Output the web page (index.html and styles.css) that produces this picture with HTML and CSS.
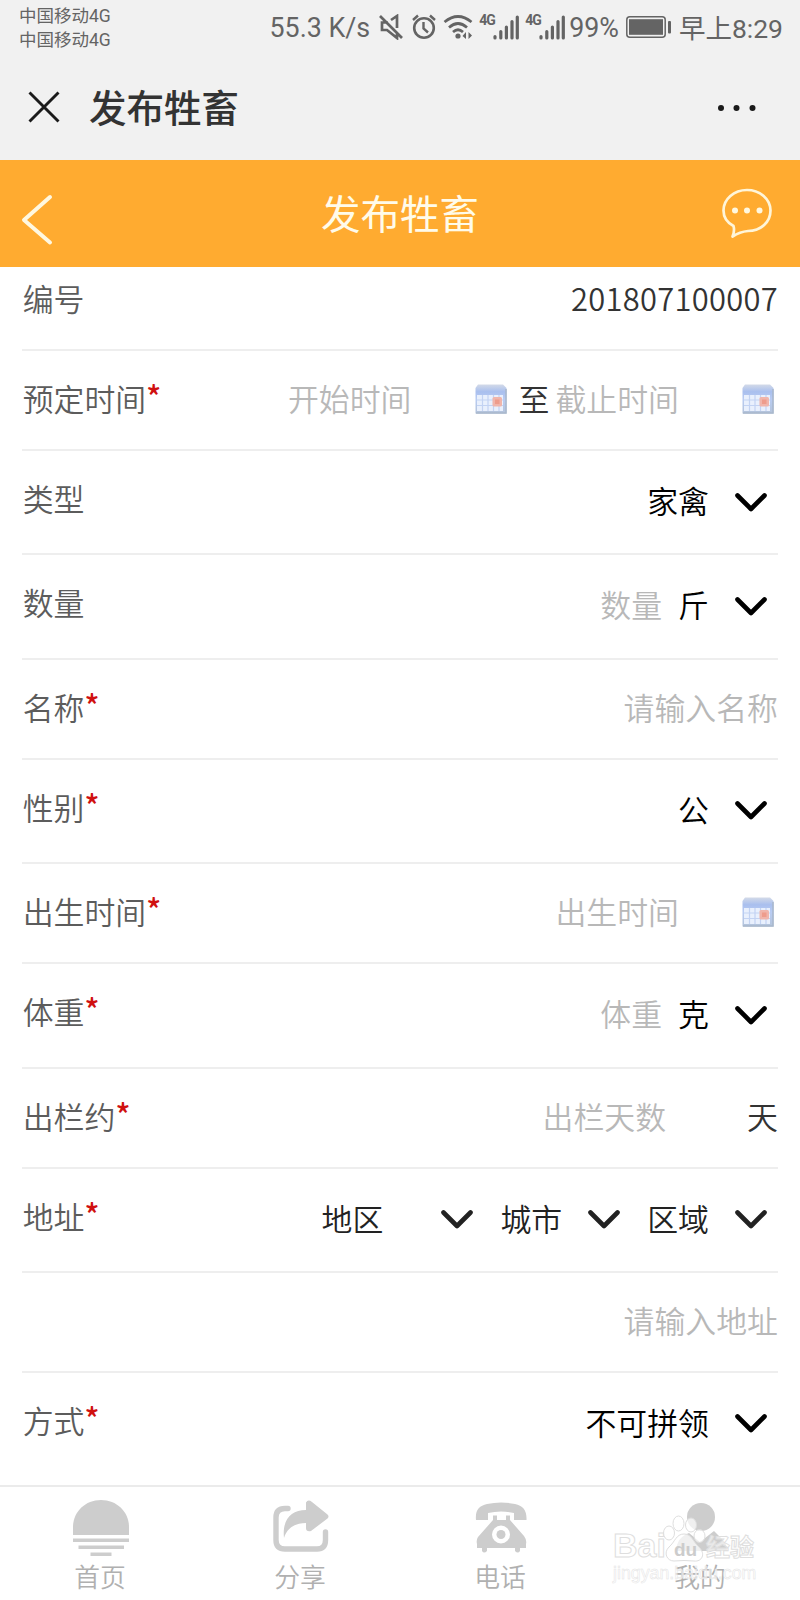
FILE: index.html
```html
<!DOCTYPE html>
<html lang="zh-CN">
<head>
    <meta charset="UTF-8">
    <title>发布牲畜</title>
    <link rel="stylesheet" href="styles.css">
</head>
<body>
<svg class="defs">
    <defs>
        <linearGradient id="calBg" x1="0" y1="0" x2="0" y2="1">
            <stop offset="0" stop-color="#d3dae8"/>
            <stop offset="0.25" stop-color="#a9bfee"/>
            <stop offset="0.5" stop-color="#b9ccf3"/>
            <stop offset="1" stop-color="#b3c3da"/>
        </linearGradient>
    </defs>
    <symbol id="down" viewBox="0 0 32 20">
        <path d="M2.5 2.5L16 16L29.5 2.5" fill="none" stroke="currentColor" stroke-width="4.6" stroke-linecap="round" stroke-linejoin="round"/>
    </symbol>
    <symbol id="cal" viewBox="0 0 32 30">
        <path d="M3 0.5H28L31.5 4V29.5H0.5V4Z" fill="url(#calBg)"/>
        <path d="M2 11H28V27H2Z" fill="#e9f0fd"/>
        <path d="M7.5 11V27M13 11V27M18.5 11V27M24 11V27M2 16H28M2 21.5H28" stroke="#c3d3f3" stroke-width="1.2"/>
        <rect x="17.5" y="13" width="9.5" height="9.5" rx="1.5" fill="#f0b5ab"/>
        <rect x="20" y="15.5" width="4.5" height="4.5" fill="#ee9c8c"/>
        <path d="M31 5V29H1" fill="none" stroke="#a9b8cb" stroke-width="1.5"/>
    </symbol>
    <symbol id="signal" viewBox="0 0 26 25">
        <path d="M2 21.5V23M7.8 16.5V23M13.4 12V23M19 6.5V23M24.3 2V23" fill="none" stroke="currentColor" stroke-width="3.2" stroke-linecap="round"/>
    </symbol>
</svg>

<div id="status">
    <div class="carrier">
        <p>中国移动4G</p>
        <p>中国移动4G</p>
    </div>
    <div class="tray">
        <span class="speed">55.3 K/s</span>
        <svg class="mute" viewBox="0 0 24 26">
            <path d="M1 2L23 24M9 8.5H3V16H8L18 24V19M12 6L18 2V14" fill="none" stroke="currentColor" stroke-width="2.7"/>
        </svg>
        <svg class="alarm" viewBox="0 0 24 26">
            <circle cx="12" cy="14" r="9.8" fill="none" stroke="currentColor" stroke-width="2.6"/>
            <path d="M1 6L6 1.5M23 6L18 1.5M11.5 8V14.5L16 18.5" fill="none" stroke="currentColor" stroke-width="2.4"/>
        </svg>
        <svg class="wifi" viewBox="0 0 30 26">
            <path d="M1.5 8Q15 -3 28.5 8M6 13.5Q15 5.5 24 13.5M10 18Q15 13.5 20 18" fill="none" stroke="currentColor" stroke-width="2.7"/>
            <circle cx="15" cy="22" r="2.6" fill="currentColor"/>
            <path d="M23 18V25L19.5 22ZM25.5 25V18L29 21.5Z" fill="currentColor"/>
        </svg>
        <span class="g4">4G</span>
        <svg class="signal"><use href="#signal"/></svg>
        <span class="g4">4G</span>
        <svg class="signal"><use href="#signal"/></svg>
        <span class="percent">99%</span>
        <svg class="battery" viewBox="0 0 46 22">
            <rect x="0.8" y="0.8" width="38.4" height="20.4" rx="3" fill="none" stroke="currentColor" stroke-width="1.5"/>
            <rect x="3" y="3.2" width="34" height="15.6" fill="currentColor"/>
            <rect x="42" y="5" width="3" height="12.5" rx="1" fill="currentColor"/>
        </svg>
        <span class="time">早上8:29</span>
    </div>
</div>

<div id="wxbar">
    <svg class="close" viewBox="0 0 32 32">
        <path d="M1.5 1.5L30.5 30.5M30.5 1.5L1.5 30.5" stroke="#1a1a1a" stroke-width="2.9"/>
    </svg>
    <h1>发布牲畜</h1>
    <svg class="more" viewBox="0 0 40 8">
        <circle cx="4" cy="4" r="3"/>
        <circle cx="19.5" cy="4" r="3"/>
        <circle cx="35.5" cy="4" r="3"/>
    </svg>
</div>

<div id="header">
    <svg class="back" viewBox="0 0 32 52">
        <path d="M29 3L3 26L29 48.5" fill="none" stroke="#fff8e0" stroke-width="4" stroke-linecap="round" stroke-linejoin="round"/>
    </svg>
    <h2>发布牲畜</h2>
    <svg class="chat" viewBox="0 0 50 50">
        <path d="M11.5 38C5 34.5 1.5 28.5 1.5 22.5C1.5 11 12 2 25 2S48.5 11 48.5 22.5S39 43 26 43C21 43.5 16 45 10.5 48.5C12 45 12.5 41.5 11.5 38Z" fill="none" stroke="#fff5d8" stroke-width="2.7" stroke-linejoin="round"/>
        <g fill="#fff8e0">
            <circle cx="13" cy="22.5" r="3"/>
            <circle cx="25" cy="22.5" r="3"/>
            <circle cx="37.5" cy="22.5" r="3"/>
        </g>
    </svg>
</div>

<ul id="form">
    <li class="first">
        <label>编号</label>
        <div class="value">201807100007</div>
    </li>
    <li>
        <label>预定时间<i>*</i></label>
        <div class="value">
            <span class="date hint">开始时间</span>
            <svg class="cal"><use href="#cal"/></svg>
            <span class="to">至</span>
            <span class="date end hint">截止时间</span>
            <svg class="cal last"><use href="#cal"/></svg>
        </div>
    </li>
    <li class="select">
        <label>类型</label>
        <div class="value">家禽<svg class="down"><use href="#down"/></svg></div>
    </li>
    <li class="select">
        <label>数量</label>
        <div class="value"><span class="num hint">数量</span>斤<svg class="down"><use href="#down"/></svg></div>
    </li>
    <li>
        <label>名称<i>*</i></label>
        <div class="value hint">请输入名称</div>
    </li>
    <li class="select">
        <label>性别<i>*</i></label>
        <div class="value">公<svg class="down"><use href="#down"/></svg></div>
    </li>
    <li>
        <label>出生时间<i>*</i></label>
        <div class="value">
            <span class="date end hint">出生时间</span>
            <svg class="cal last"><use href="#cal"/></svg>
        </div>
    </li>
    <li class="select">
        <label>体重<i>*</i></label>
        <div class="value"><span class="num hint">体重</span>克<svg class="down"><use href="#down"/></svg></div>
    </li>
    <li>
        <label>出栏约<i>*</i></label>
        <div class="value"><span class="days hint">出栏天数</span>天</div>
    </li>
    <li class="select area">
        <label>地址<i>*</i></label>
        <div class="value">
            <span class="province">地区</span><svg class="down"><use href="#down"/></svg>
            <span class="city">城市</span><svg class="down"><use href="#down"/></svg>
            <span class="city">区域</span><svg class="down"><use href="#down"/></svg>
        </div>
    </li>
    <li>
        <label></label>
        <div class="value hint">请输入地址</div>
    </li>
    <li class="select final">
        <label>方式<i>*</i></label>
        <div class="value">不可拼领<svg class="down"><use href="#down"/></svg></div>
    </li>
</ul>

<div id="footer">
    <div class="tab">
        <svg viewBox="0 0 58 58">
            <path d="M2 35V27C2 12 14 0 30 0S58 12 58 27V35Z"/>
            <path d="M2 38.5H58V42H2ZM7.5 45.5H53V49H7.5ZM19.5 52.5H40.5V56H19.5Z"/>
        </svg>
        <span>首页</span>
    </div>
    <div class="tab">
        <svg viewBox="0 0 58 58">
            <path d="M17 8.5H14Q5 8.5 5 17.5V40Q5 49 14 49H46Q54.5 49 54.5 40V32" fill="none" stroke="#cdcdcd" stroke-width="5.4" stroke-linecap="round"/>
            <path d="M13 38C11 20 20 10 35 10V2.5Q37 -1 41 2L56.5 14.5Q58.5 16.5 56.5 18.5L40 31Q35 32 35 28V23C24 23 16 28 13 38Z"/>
        </svg>
        <span>分享</span>
    </div>
    <div class="tab">
        <svg viewBox="0 0 58 58">
            <path d="M5 20C4 10 8 6 16 4Q30 1 44 4C52 6 56 10 55.5 20H43V13Q30 10 17 13V20Z"/>
            <path fill-rule="evenodd" d="M22 15.5H26V20H35V15.5H39V20L53 36Q56 40 55 44V48H49V51Q47 54 44 51V48H16V51Q13 54 11 51V48H6V44Q5 40 7 37L22 20ZM30 25.5A9 9 0 1 0 30 43.5A9 9 0 1 0 30 25.5Z"/>
            <circle cx="30" cy="34.5" r="4.5"/>
        </svg>
        <span>电话</span>
    </div>
    <div class="tab">
        <svg viewBox="0 0 58 58">
            <circle cx="30" cy="17" r="14"/>
            <path d="M5 51Q6 37 18 33L29 42L43 31L51 39Q56 44 56 51Z"/>
        </svg>
        <span>我的</span>
    </div>
    <div class="watermark">
        <div class="brand">
            <b>Bai</b>
            <svg viewBox="0 0 46 48">
                <g fill="#fff" fill-opacity="0.7" stroke="#dedede">
                    <ellipse cx="7" cy="18" rx="5.5" ry="7"/>
                    <ellipse cx="16.5" cy="8.5" rx="5.5" ry="7.5"/>
                    <ellipse cx="29" cy="10" rx="5.5" ry="7"/>
                    <ellipse cx="37.5" cy="21" rx="5.5" ry="6.5"/>
                    <path d="M22 19C14 19 13 27 7 32C1 38 5 46 12 46Q22 45 32 46C40 47 44 39 37 32C31 27 30 19 22 19Z"/>
                </g>
                <text x="12" y="41">du</text>
            </svg>
            <b class="cn">经验</b>
        </div>
        <p>jingyan.baidu.com</p>
    </div>
</div>
</body>
</html>
```
FILE: styles.css
```css
*{
    margin: 0;
    padding: 0;
    box-sizing: border-box;
}
body{
    width: 800px;
    height: 1600px;
    overflow: hidden;
    display: flex;
    flex-direction: column;
    background: #fff;
    font-family: "Noto Sans CJK SC", sans-serif;
    color: #333;
}
ul{
    list-style: none;
}
i{
    font-style: normal;
}
svg{
    display: block;
    flex: none;
}
.defs{
    position: absolute;
    width: 0;
    height: 0;
}

/* 状态栏 */
#status{
    height: 56px;
    padding: 4px 17px 0 19px;
    display: flex;
    justify-content: space-between;
    background: #f1f1f1;
    color: #646464;
    font-family: Roboto, "Noto Sans CJK SC", sans-serif;
}
.carrier{
    font-size: 17.5px;
    line-height: 24px;
}
.tray{
    display: flex;
    height: 46px;
    align-items: center;
    font-size: 26.8px;
    white-space: nowrap;
}
.speed, .percent{
    margin-top: 2px;
}
.time{
    margin-top: -1px;
    font-size: 26.5px;
}
.mute{
    width: 24px;
    height: 26px;
    margin-left: 9px;
}
.alarm{
    width: 24px;
    height: 26px;
    margin-left: 9px;
}
.wifi{
    width: 30px;
    height: 26px;
    margin-left: 7px;
}
.g4{
    font-size: 14px;
    font-weight: bold;
    width: 14px;
    margin: -14px 0 0 6px;
    letter-spacing: -1px;
}
.signal{
    width: 26px;
    height: 25px;
}
.percent{
    margin-left: 4px;
}
.battery{
    width: 46px;
    height: 22px;
    margin: 0 7px 0 7px;
}

/* 微信标题栏 */
#wxbar{
    height: 104px;
    padding: 0 43px 2px 28px;
    display: flex;
    align-items: center;
    background: #f1f1f1;
}
.close{
    width: 32px;
    height: 32px;
}
#wxbar h1{
    flex: 1;
    margin: -2px 0 0 29px;
    font-size: 37.5px;
    line-height: 56px;
    font-weight: 500;
}
.more{
    width: 40px;
    height: 8px;
    margin-top: 2px;
    fill: #1a1a1a;
}

#header{
    height: 107px;
    padding: 0 28px 2px 21px;
    display: flex;
    justify-content: space-between;
    align-items: center;
    background: #ffab30;
}
.back{
    width: 32px;
    height: 52px;
    margin-top: 14px;
}
#header h2{
    margin: -2px 0 0 25px;
    font-size: 39.5px;
    font-weight: normal;
    line-height: 58px;
    color: #fffbea;
}
.chat{
    width: 50px;
    height: 50px;
}

/* 表单 */
#form{
    flex: 1;
    padding: 0 22px;
    font-size: 30.9px;
    font-weight: 350;
    line-height: 46px;
}
#form li{
    height: 100px;
    display: flex;
    justify-content: space-between;
    padding-top: 24px;
    border-bottom: 2px solid #eee;
}
#form .first{
    height: 84px;
    padding-top: 8px;
}
.first .value{
    letter-spacing: 0.3px;
}
#form .select{
    height: 104.4px;
}
#form .final{
    border: 0;
}
#form label{
    padding-left: 0.7px;
    color: #5c5c5c;
}
label i{
    display: inline-block;
    line-height: 40px;
    vertical-align: 2px;
    color: #d01010;
    font-weight: 500;
}
.value{
    display: flex;
    height: 46px;
    align-items: center;
    white-space: nowrap;
}
.select .value{
    margin-top: 2px;
    color: #000;
}
.area .value{
    color: #222;
}
.hint, .select .hint{
    color: #b8b8b8;
}
.cal{
    width: 32px;
    height: 30px;
    margin: 1px 12px 0 63px;
}
.cal.last{
    margin-right: 4px;
}
.date.end{
    margin-left: 6px;
}
.down{
    width: 32px;
    height: 20px;
    margin: 5px 11px 0 26px;
}
.num{
    margin-right: 16px;
}
.days{
    margin-right: 81px;
}
.province{
    margin-right: 32px;
}
.city{
    margin-left: 16px;
}

/* 底部导航 */
#footer{
    position: relative;
    height: 115px;
    display: flex;
    border-top: 2px solid #ebebeb;
}
.tab{
    flex: 1;
    display: flex;
    flex-direction: column;
    align-items: center;
    padding-top: 13px;
}
.tab svg{
    width: 58px;
    height: 58px;
    fill: #cdcdcd;
}
.tab span{
    margin-top: -1px;
    font-size: 25.8px;
    line-height: 38px;
    font-weight: 350;
    color: #b0b0b0;
}
/* 水印 */
.watermark{
    position: absolute;
    left: 613px;
    top: 26px;
    width: 145px;
    color: rgba(255, 255, 255, 0.6);
}
.brand{
    display: flex;
    align-items: flex-end;
    height: 50px;
}
.brand b{
    font: bold 34px/36px "Liberation Sans", sans-serif;
    -webkit-text-stroke: 1px #dedede;
}
.brand b.cn{
    font: bold 24px/34px "Noto Sans CJK SC", sans-serif;
    margin-left: -2px;
}
.brand svg{
    width: 46px;
    height: 48px;
    margin-left: -4px;
}
.brand text{
    font: bold 19px "Liberation Sans", sans-serif;
    fill: #ccc;
}
.watermark p{
    font: 17.8px/20px "Liberation Sans", sans-serif;
    -webkit-text-stroke: 0.5px #e3e3e3;
}
```
